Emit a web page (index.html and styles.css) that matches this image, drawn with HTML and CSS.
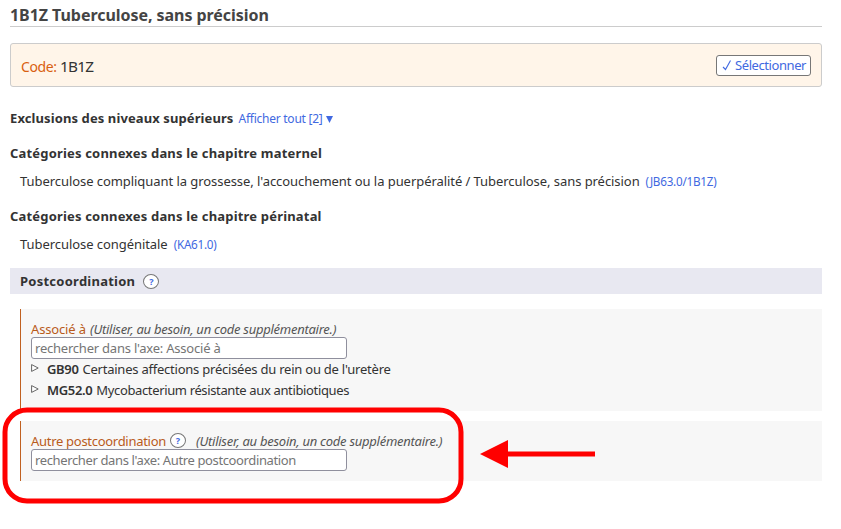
FILE: index.html
```html
<!DOCTYPE html>
<html lang="fr">
<head>
<meta charset="utf-8">
<title>1B1Z Tuberculose, sans précision</title>
<link rel="stylesheet" href="styles.css">
</head>
<body>
<main class="page">
  <h1 class="title"><span>1B1Z Tuberculose, sans précision</span></h1>
  <section class="code-box">
    <span class="code-label">Code:</span><span class="code-value">1B1Z</span>
    <button class="select"><svg class="check" width="10" height="13" viewBox="0 0 10 13"><path d="M1 8 L3.5 10.5 L8.5 1.5" fill="none" stroke="#4169e1" stroke-width="1.1"/></svg><span class="select-text">Sélectionner</span></button>
  </section>
  <div class="heading first"><b class="h-excl">Exclusions des niveaux supérieurs</b><a class="show-all">Afficher tout [2]</a><svg class="caret" width="7" height="7" viewBox="0 0 7 7"><path d="M0 0H7L3.5 7Z" fill="#4169e1"/></svg></div>
  <div class="heading"><b class="h-mat">Catégories connexes dans le chapitre maternel</b></div>
  <div class="item"><span class="t-mat">Tuberculose compliquant la grossesse, l'accouchement ou la puerpéralité / Tuberculose, sans précision</span><a class="ref r-mat">(JB63.0/1B1Z)</a></div>
  <div class="heading"><b class="h-per">Catégories connexes dans le chapitre périnatal</b></div>
  <div class="item"><span class="t-per">Tuberculose congénitale</span><a class="ref r-per">(KA61.0)</a></div>
  <div class="band"><b class="h-post">Postcoordination</b><span class="help">?</span></div>
  <section class="axis axis-assoc">
    <div class="axis-head"><span class="a-assoc">Associé à</span><i class="note">(Utiliser, au besoin, un code supplémentaire.)</i></div>
    <div class="search"><span class="p-assoc">rechercher dans l'axe: Associé à</span></div>
    <div class="node"><svg class="tri" width="8" height="8" viewBox="0 0 8 8"><path d="M.6 .6L7.2 4L.6 7.4Z" fill="#fff" stroke="#555" stroke-width=".9"/></svg><b class="c-gb">GB90</b><span class="n-gb">Certaines affections précisées du rein ou de l'uretère</span></div>
    <div class="node"><svg class="tri" width="8" height="8" viewBox="0 0 8 8"><path d="M.6 .6L7.2 4L.6 7.4Z" fill="#fff" stroke="#555" stroke-width=".9"/></svg><b class="c-mg">MG52.0</b><span class="n-mg">Mycobacterium résistante aux antibiotiques</span></div>
  </section>
  <section class="axis axis-other">
    <div class="axis-head"><span class="a-other">Autre postcoordination</span><span class="help">?</span><i class="note">(Utiliser, au besoin, un code supplémentaire.)</i></div>
    <div class="search"><span class="p-other">rechercher dans l'axe: Autre postcoordination</span></div>
  </section>
</main>
<svg class="callout" width="841" height="529" viewBox="0 0 841 529"><rect x="5" y="410" width="456" height="91" rx="22" fill="none" stroke="#f00" stroke-width="5"/><path d="M480 454L508 440V451.500H595V456.500H508V468Z" fill="#f00"/></svg>
</body>
</html>
```
FILE: styles.css
```css
* { box-sizing: border-box; }
body { margin: 0; width: 841px; height: 529px; overflow: hidden; background: #fff; color: #333; font: 13px/20px "Noto Sans", "Open Sans", sans-serif; }
.page { width: 812px; margin-left: 10px; white-space: nowrap; }
.title { margin: 0; height: 27px; padding-top: 5px; border-bottom: 1px solid #ccc; font-size: 16px; line-height: 20px; letter-spacing: -.05px; color: #444; }
.code-box { display: flex; align-items: center; height: 44px; margin-top: 16px; padding: 0 10px; border: 1px solid #ccc; border-radius: 3px; background: #fff5e9; }
.code-label { width: 39px; padding-top: 3px; font-size: 14px; letter-spacing: -.4px; color: #d95f10; }
.code-value { padding-top: 1px; font-size: 15.3px; letter-spacing: -.7px; }
.select { display: flex; align-items: center; width: 95px; height: 21px; margin-left: auto; padding: 0 0 0 5px; border: 1px solid #777; border-radius: 3px; background: #fff; color: #4169e1; font: 13px/19px "Noto Sans", sans-serif; letter-spacing: -.42px; }
.check { flex: none; margin-right: 3px; }
.heading { display: flex; align-items: center; height: 20px; margin-top: 15px; }
.first { margin-top: 21px; }
.item { display: flex; align-items: center; height: 20px; margin: 8px 0 0 10px; }
.h-excl { letter-spacing: .1px; }
.h-mat, .h-per { letter-spacing: .18px; }
.h-post { letter-spacing: .25px; }
.t-mat, .t-per { letter-spacing: -.06px; }
.show-all { margin: 2px 0 0 5px; font-size: 12px; letter-spacing: -.25px; color: #4169e1; }
.caret { margin: 3px 0 0 3px; }
.ref { margin-left: 6px; font-size: 11.7px; letter-spacing: -.25px; color: #4169e1; }
.band { display: flex; align-items: center; height: 26px; margin-top: 14px; padding-left: 10px; background: #e8e8f1; }
.help { display: flex; align-items: center; justify-content: center; flex: none; width: 16px; height: 15px; margin-left: 8px; border: 1px solid #777; border-radius: 50%; background: #fff; color: #4169e1; font-size: 9px; font-weight: 700; line-height: 13px; }
.axis { margin: 15px 0 0 10px; padding: 10px 0 0 10px; border-left: 1px solid #c06020; background: #f7f7f7; }
.axis-assoc { height: 102px; }
.axis-other { height: 60px; margin-top: 10px; }
.axis-head { display: flex; align-items: center; height: 20px; color: #b95b1b; }
.axis-head .help { margin: -2px 0 0 4px; }
.a-assoc { letter-spacing: -.15px; }
.a-other { letter-spacing: -.29px; }
.axis .note { margin-left: 4px; letter-spacing: -.26px; color: #555; }
.axis .help + .note { margin-left: 10px; }
.search { display: flex; align-items: center; width: 316px; height: 22px; margin-top: -2px; padding-left: 3px; border: 1px solid #8f8f9d; border-radius: 3px; background: #fff; color: #757575; }
.p-assoc { letter-spacing: -.22px; }
.p-other { letter-spacing: -.37px; }
.node { display: flex; align-items: center; height: 21px; }
.node b, .node span { margin-top: -2px; }
.node b { margin-right: 4px; letter-spacing: -.35px; font-weight: 600; }
.n-gb { letter-spacing: -.23px; }
.n-mg { letter-spacing: -.36px; }
.tri { margin: 0 8px 4px 0; }
.callout { position: absolute; left: 0; top: 0; pointer-events: none; }
```
